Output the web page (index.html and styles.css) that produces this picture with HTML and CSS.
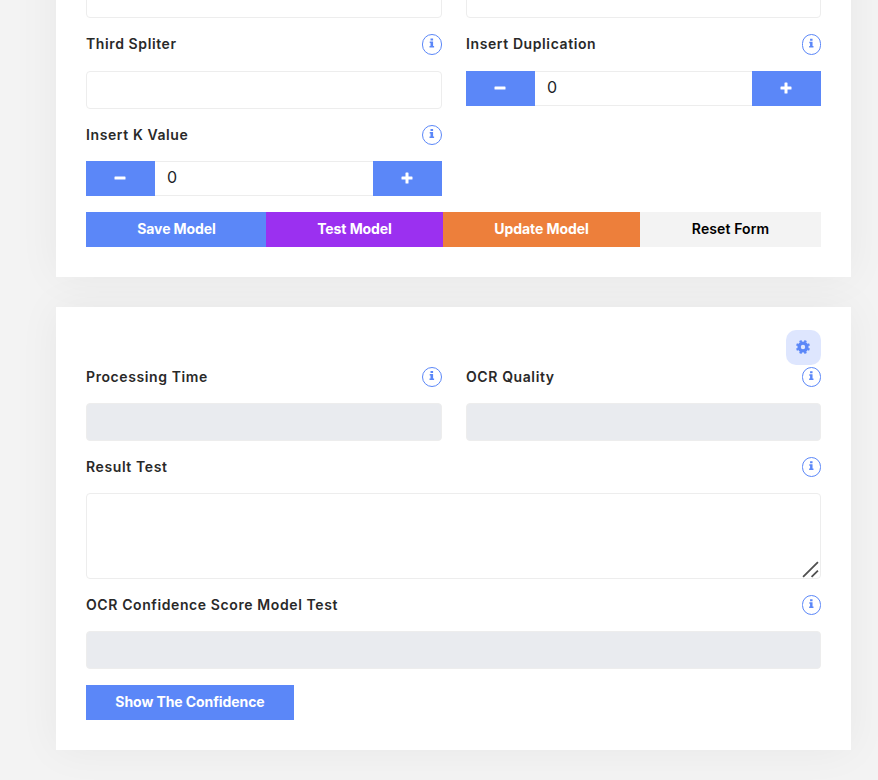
FILE: index.html
```
<!DOCTYPE html>
<html lang="en">
<head>
<meta charset="utf-8">
<title>Model Form</title>
<link rel="stylesheet" href="styles.css">
</head>
<body>
<svg width="0" height="0" class="defs">
  <symbol id="info" viewBox="0 0 18 18"><path d="M7.500 3h2.600v2H7.500zM6.700 6h3.400v4.500h1v1.600H6.500v-1.600h1V7.600h-.8z"/></symbol>
  <symbol id="minus" viewBox="0 0 12 12"><rect x=".5" y="4.5" width="11" height="3" rx=".6"/></symbol>
  <symbol id="plus" viewBox="0 0 12 12"><rect x=".5" y="4.5" width="11" height="3" rx=".6"/><rect x="4.5" y=".5" width="3" height="11" rx=".6"/></symbol>
</svg>
<main class="page">
  <section class="card card-model">
    <div class="grid">
      <div class="input"></div>
      <div class="input"></div>
      <div class="field">
        <div class="label tall"><span>Third Spliter</span><svg class="info"><use href="#info"/></svg></div>
        <div class="input"></div>
      </div>
      <div class="field">
        <div class="label tall"><span>Insert Duplication</span><svg class="info narrow"><use href="#info"/></svg></div>
        <div class="stepper"><button><svg><use href="#minus"/></svg></button><span class="value">0</span><button><svg><use href="#plus"/></svg></button></div>
      </div>
      <div class="field">
        <div class="label"><span>Insert K Value</span><svg class="info"><use href="#info"/></svg></div>
        <div class="stepper"><button><svg><use href="#minus"/></svg></button><span class="value">0</span><button><svg><use href="#plus"/></svg></button></div>
      </div>
    </div>
    <div class="actions">
      <button class="btn save"><span>Save Model</span></button>
      <button class="btn test"><span>Test Model</span></button>
      <button class="btn update"><span>Update Model</span></button>
      <button class="btn reset"><span>Reset Form</span></button>
    </div>
  </section>
  <section class="card card-result">
    <div class="toolbar">
      <button class="gear"><svg viewBox="-8 -8 16 16"><circle r="3.900" class="ring"/><path class="teeth" d="M-2.700-6.500-2-4.800M2.700-6.500 2-4.800M-2.700 6.500-2 4.800M2.700 6.500 2 4.800M-6.500-2.700-4.800-2M-6.500 2.700-4.800 2M6.500-2.700 4.800-2M6.500 2.700 4.800 2"/></svg></button>
    </div>
    <div class="grid">
      <div class="field">
        <div class="label"><span>Processing Time</span><svg class="info"><use href="#info"/></svg></div>
        <div class="input disabled"></div>
      </div>
      <div class="field">
        <div class="label"><span>OCR Quality</span><svg class="info narrow"><use href="#info"/></svg></div>
        <div class="input disabled"></div>
      </div>
      <div class="field wide">
        <div class="label"><span>Result Test</span><svg class="info narrow"><use href="#info"/></svg></div>
        <div class="input area"><svg class="grip" viewBox="0 0 16 16"><path d="M1 15 15 1M9 15l6-6"/></svg></div>
      </div>
      <div class="field wide">
        <div class="label"><span>OCR Confidence Score Model Test</span><svg class="info narrow"><use href="#info"/></svg></div>
        <div class="input disabled"></div>
      </div>
    </div>
    <button class="btn show"><span>Show The Confidence</span></button>
  </section>
</main>
</body>
</html>
```
FILE: styles.css
```
* { box-sizing: border-box; }
body {
  margin: 0;
  height: 780px;
  overflow: hidden;
  background: #f3f3f3;
  font-family: Inter, "Liberation Sans", sans-serif;
}
button { border: 0; padding: 0; margin: 0; font: inherit; }
svg { display: block; fill: #5b87f8; }
.defs { position: absolute; }
.page {
  display: flex;
  flex-direction: column;
  gap: 30px;
  width: 795px;
  margin-left: 56px;
}
.card {
  padding: 0 30px 30px;
  background: #fff;
  box-shadow: 0 0 40px rgba(0, 0, 0, .05);
}
.card-model { margin-top: -50px; padding-top: 30px; }
.card-result { padding-top: 23px; }
.grid {
  display: grid;
  grid-template-columns: 356px 355px;
  gap: 16px 24px;
}
.wide { grid-column: 1 / -1; }
.label {
  display: flex;
  justify-content: space-between;
  height: 20px;
  margin-bottom: 16px;
  color: #292929;
  font-size: 14px;
  font-weight: 600;
  line-height: 20px;
  letter-spacing: .6px;
}
.label.tall { height: 21px; }
.info {
  width: 20px;
  height: 100%;
  border: 1px solid #5b87f8;
  border-radius: 10px;
}
.info.narrow { width: 19px; }
.input {
  position: relative;
  height: 38px;
  border: 1px solid #ededed;
  border-radius: 4px;
  background: #fff;
}
.input.disabled { background: #e9ebef; }
.input.area { height: 86px; }
.grip {
  position: absolute;
  right: 1px;
  bottom: 0;
  width: 17px;
  height: 17px;
  fill: none;
  stroke: #505050;
  stroke-width: 1.7;
}
.stepper { display: flex; height: 35px; }
.stepper button {
  display: flex;
  align-items: center;
  justify-content: center;
  width: 69px;
  padding-right: 1px;
  background: #5b87f8;
}
.stepper svg { width: 12px; height: 12px; margin-top: -2px; fill: #fff; }
.value {
  flex: 1;
  padding-left: 12px;
  border: solid #ededed;
  border-width: 1px 0;
  color: #212529;
  font-size: 16px;
  line-height: 31px;
}
.actions {
  display: grid;
  grid-template-columns: 180px 177px 197px 181px;
  margin-top: 16px;
}
.btn {
  height: 35px;
  padding-bottom: 2px;
  color: #fff;
  font-size: 14px;
  font-weight: 700;
  line-height: 33px;
  letter-spacing: -.08px;
}
.save, .show { background: #5b87f8; }
.save { padding-left: 1px; }
.test { background: #9b30f0; }
.update { background: #ed7f3b; }
.reset { background: #f3f3f3; color: #000; font-weight: 600; letter-spacing: .1px; }
.show { display: block; width: 208px; margin-top: 16px; }
.toolbar { display: flex; justify-content: flex-end; margin-bottom: 2px; }
.gear {
  display: flex;
  align-items: center;
  justify-content: center;
  width: 35px;
  height: 35px;
  padding: 0 1px 1px 0;
  border-radius: 10px;
  background: #dee6fe;
}
.gear svg { width: 16px; height: 16px; }
.ring, .teeth { fill: none; stroke: #5b87f8; }
.ring { stroke-width: 3.400; }
.teeth { stroke-width: 2.400; }
```
